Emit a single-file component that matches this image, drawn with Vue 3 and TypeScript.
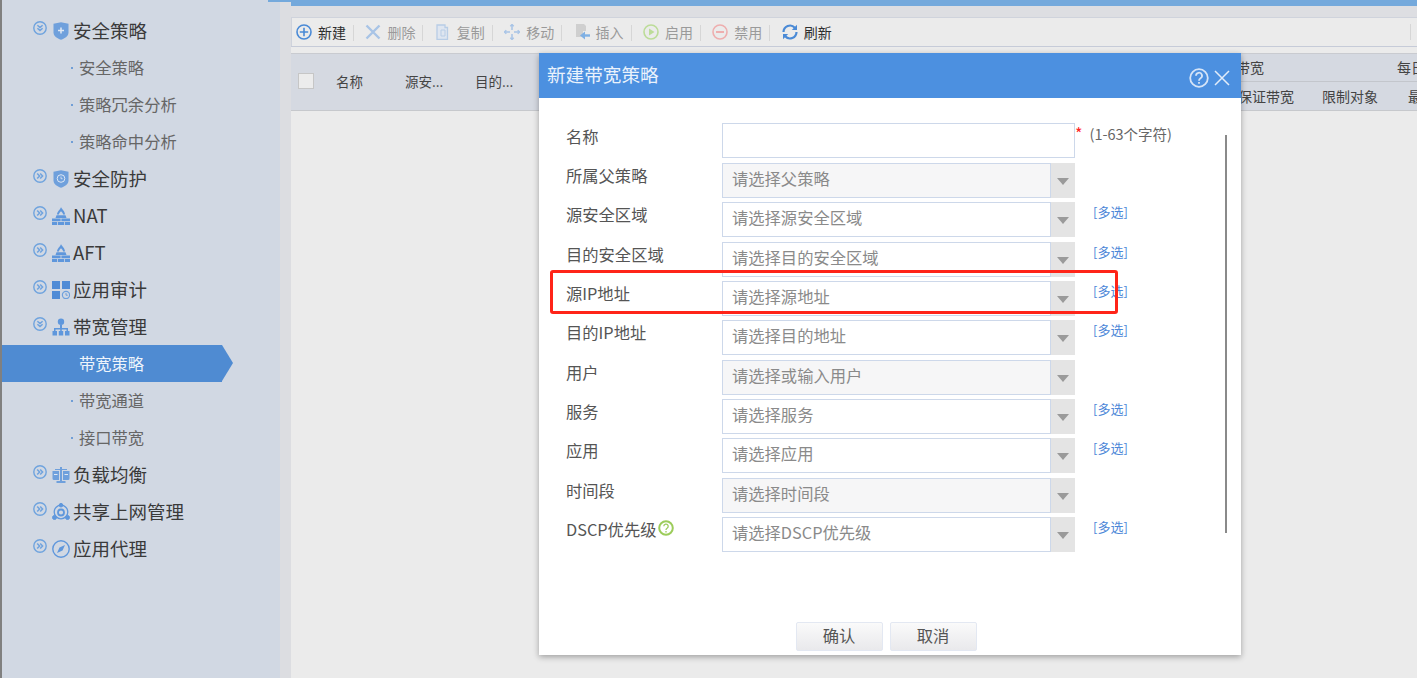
<script setup lang="ts">
type NavItem = { label: string; icon?: string; sub?: boolean; open?: boolean; active?: boolean }
const nav: NavItem[] = [
  { label: '安全策略', icon: 'shield', open: true },
  { label: '安全策略', sub: true },
  { label: '策略冗余分析', sub: true },
  { label: '策略命中分析', sub: true },
  { label: '安全防护', icon: 'guard' },
  { label: 'NAT', icon: 'wall' },
  { label: 'AFT', icon: 'wall' },
  { label: '应用审计', icon: 'grid' },
  { label: '带宽管理', icon: 'org', open: true },
  { label: '带宽策略', sub: true, active: true },
  { label: '带宽通道', sub: true },
  { label: '接口带宽', sub: true },
  { label: '负载均衡', icon: 'scale' },
  { label: '共享上网管理', icon: 'share' },
  { label: '应用代理', icon: 'compass' }
]
const tools = [
  { key: 'add', label: '新建', on: true },
  { key: 'del', label: '删除' },
  { key: 'copy', label: '复制' },
  { key: 'move', label: '移动' },
  { key: 'insert', label: '插入' },
  { key: 'enable', label: '启用' },
  { key: 'disable', label: '禁用' },
  { key: 'refresh', label: '刷新', on: true }
]
const rows = [
  { label: '所属父策略', ph: '请选择父策略', off: true },
  { label: '源安全区域', ph: '请选择源安全区域', multi: true },
  { label: '目的安全区域', ph: '请选择目的安全区域', multi: true },
  { label: '源IP地址', ph: '请选择源地址', multi: true },
  { label: '目的IP地址', ph: '请选择目的地址', multi: true },
  { label: '用户', ph: '请选择或输入用户', off: true },
  { label: '服务', ph: '请选择服务', multi: true },
  { label: '应用', ph: '请选择应用', multi: true },
  { label: '时间段', ph: '请选择时间段', off: true },
  { label: 'DSCP优先级', ph: '请选择DSCP优先级', multi: true, help: true }
]
</script>

<template>
  <div class="page">
    <div class="edge"></div>
    <aside class="side">
      <div v-for="(n, i) in nav" :key="i" class="nav" :class="{ sub: n.sub, active: n.active }">
        <template v-if="n.sub">
          <span class="dot"></span>
          <span class="subtext">{{ n.label }}</span>
        </template>
        <template v-else>
          <svg class="chev" viewBox="0 0 14 14" fill="none" stroke="#6fa3de">
            <circle cx="7" cy="7" r="6.2" stroke-width="1.4" />
            <path v-if="n.open" d="M4.4 4.2 7 6.6 9.6 4.200M4.400 7.200 7 9.600 9.600 7.200" stroke-width="1.500" />
            <path v-else d="M4.200 4.400 6.600 7 4.200 9.600M7.200 4.400 9.600 7 7.200 9.600" stroke-width="1.500" />
          </svg>
          <svg class="ico" viewBox="0 0 18 18">
            <g v-if="n.icon === 'shield'">
              <path d="M1.500 1.800 9 .3l7.500 1.500v8.700c0 3.500-3.500 6-7.500 7.300-4-1.300-7.500-3.800-7.500-7.300z" fill="#6fa0dc" />
              <path d="M9 5.500v6M6 8.500h6" stroke="#dfe8f4" stroke-width="1.500" />
            </g>
            <g v-else-if="n.icon === 'guard'">
              <path d="M1.500 1.800 9 .3l7.500 1.500v8.700c0 3.500-3.500 6-7.500 7.300-4-1.300-7.500-3.800-7.500-7.300z" fill="#6fa0dc" />
              <circle cx="9" cy="8.500" r="3.800" fill="none" stroke="#dfe8f4" stroke-width="1" />
              <path d="M9 6.500v2.200h1.600" fill="none" stroke="#dfe8f4" stroke-width=".8" />
            </g>
            <g v-else-if="n.icon === 'wall'" fill="#5f97dc">
              <path d="M9 0c.5 2 4 4 4 7.500h-2c0-1.500-1-2.400-2-3.300-1 1-2 1.800-2 3.300H5C5 4.500 8.500 2.500 9 0z" />
              <path d="M4.500 8.200h9l1 2.800h-11zM0 11.500h8.600v2.800H0zM9.400 11.500H18v2.800H9.400zM0 15h5v3H0zM5.800 15h6.400v3H5.800zM13 15h5v3h-5z" />
            </g>
            <g v-else-if="n.icon === 'grid'">
              <path d="M0 0h8v8H0zM10 0h8v8h-8zM0 10h8v8H0z" fill="#4f8bd6" />
              <circle cx="14" cy="14" r="3.600" fill="none" stroke="#6fa0dc" stroke-width="1.200" />
              <path d="M14 12v2.200h1.800" fill="none" stroke="#6fa0dc" />
            </g>
            <g v-else-if="n.icon === 'org'" fill="#5f97dc">
              <circle cx="9" cy="3.800" r="3.200" />
              <path d="M8 7h2v3h6v3.500h-1.500V11.500h-4.700v2H8.200v-2H3.500v2H2V10h6z" />
              <path d="M.5 13h4.500v4.500H.500zM6.800 13h4.400v4.500H6.800zM13 13h4.500v4.500H13z" />
            </g>
            <g v-else-if="n.icon === 'scale'" fill="#6fa0dc">
              <path d="M8 1h2v14h3.500v2h-9v-2H8z" />
              <path d="M.5 5H7v9H2a1.500 1.500 0 0 1-1.500-1.500zM11 5h6.500v7.500A1.500 1.500 0 0 1 16 14h-5z" />
              <path d="M3 3h12v1H3z" />
              <path d="M2 8h3.500v1H2zM12.500 8H16v1h-3.500z" fill="#dfe8f4" />
            </g>
            <g v-else-if="n.icon === 'share'" fill="none" stroke="#5f97dc">
              <circle cx="9" cy="9" r="6.800" stroke-width="1.300" />
              <circle cx="9" cy="9.500" r="3" stroke-width="1.800" />
              <circle cx="9" cy="2.200" r="1.800" fill="#5f97dc" />
              <circle cx="2.500" cy="14.500" r="2" fill="#5f97dc" />
              <circle cx="15.500" cy="14.500" r="2" fill="#5f97dc" />
            </g>
            <g v-else>
              <circle cx="9" cy="9" r="8.200" fill="none" stroke="#5f97dc" stroke-width="1.400" />
              <path d="M13 5 10.500 10.500 5 13 7.500 7.500z" fill="#5f97dc" />
            </g>
          </svg>
          <span class="top">{{ n.label }}</span>
        </template>
      </div>
    </aside>
    <div class="gutter"><span class="corner"></span></div>

    <main class="main">
      <div class="banner"></div>
      <div class="toolbar">
        <div v-for="t in tools" :key="t.key" class="tool" :class="{ on: t.on }">
          <svg class="tico" viewBox="0 0 16 16" fill="none">
            <g v-if="t.key === 'add'" stroke="#4a8ad6">
              <circle cx="8" cy="8" r="7" stroke-width="1.600" />
              <path d="M8 3.800v8.400M3.800 8h8.400" stroke-width="1.600" />
            </g>
            <path v-else-if="t.key === 'del'" d="M1.500 1.500l13 13M14.500 1.500l-13 13" stroke="#a8c4e6" stroke-width="2.400" />
            <g v-else-if="t.key === 'copy'" stroke="#b8cde6">
              <path d="M2 1h8v2.500h2.500V15.500H2z" fill="#dfe6f0" stroke-width="1.300" />
              <path d="M6 6h4v6H6z" stroke-width="1" />
            </g>
            <g v-else-if="t.key === 'move'" stroke="#a8c4e6" stroke-width="1.500">
              <path d="M8 .5v5.500M8 10v5.500M.5 8H6M10 8h5.500" />
              <path d="M6.300 2.300 8 .6l1.700 1.700M6.300 13.700 8 15.400l1.700-1.700M2.300 6.300.6 8l1.700 1.700M13.700 6.300 15.400 8l-1.700 1.700" />
            </g>
            <g v-else-if="t.key === 'insert'">
              <path d="M2 0h8l2 2v5H9v6H2z" fill="#cfcfcf" />
              <path d="M16 11.500H9" stroke="#7fb0e4" stroke-width="2.400" />
              <path d="M6 11.500 11 7.500v8z" fill="#7fb0e4" />
            </g>
            <g v-else-if="t.key === 'enable'">
              <circle cx="8" cy="8" r="7" stroke="#bcdc98" stroke-width="1.600" />
              <path d="M6 4.500 11.500 8 6 11.500z" fill="#bcdc98" />
            </g>
            <g v-else-if="t.key === 'disable'" stroke="#eeaeae">
              <circle cx="8" cy="8" r="7" stroke-width="1.600" />
              <path d="M4 8h8" stroke-width="2" />
            </g>
            <g v-else stroke="#4a8ad6" stroke-width="2.200">
              <path d="M1.500 8a6.500 6.500 0 0 1 11.300-4.300" />
              <path d="M14.500 8a6.500 6.500 0 0 1-11.300 4.300" />
              <path d="M15 .8V6h-5.200z" stroke-width="0" fill="#4a8ad6" />
              <path d="M1 15.200V10h5.200z" stroke-width="0" fill="#4a8ad6" />
            </g>
          </svg>
          <span>{{ t.label }}</span>
          <i v-if="t.key !== 'refresh'" class="sep"></i>
        </div>
        <i class="tend"></i>
      </div>

      <div class="thead">
        <span class="check"></span>
        <span class="th w-name">名称</span>
        <span class="th w-col">源安...</span>
        <span class="th w-col">目的...</span>
        <div class="th-right">
          <div class="tr-up">
            <span class="band">带宽</span>
            <span>每日</span>
          </div>
          <div class="tr-down">
            <span class="guar">保证带宽</span>
            <span class="lim">限制对象</span>
            <span>最</span>
          </div>
        </div>
      </div>
    </main>

    <section class="dialog">
      <header class="dhead">
        <span class="dtitle">新建带宽策略</span>
        <svg class="help" viewBox="0 0 20 20" fill="none" stroke="#d5e4f7">
          <circle cx="10" cy="10" r="8.800" stroke-width="1.800" />
          <path d="M7 7.800a3 3 0 1 1 4.500 2.500c-1 .6-1.500 1-1.500 2.400" stroke-width="1.800" />
          <path d="M10 14v1.800" stroke-width="1.800" />
        </svg>
        <svg class="close" viewBox="0 0 16 16" fill="none" stroke="#e2ecf9" stroke-width="1.500">
          <path d="M1 1l14 14M15 1 1 15" />
        </svg>
      </header>

      <div class="dbody">
        <div class="frow name">
          <label class="flabel">名称</label>
          <div class="input"></div>
          <span class="req"><b>*</b>(1-63个字符)</span>
        </div>
        <div v-for="r in rows" :key="r.label" class="frow">
          <label class="flabel">
            {{ r.label }}
            <svg v-if="r.help" class="qm" viewBox="0 0 16 16" fill="none" stroke="#9ccc5a">
              <circle cx="8" cy="8" r="6.800" stroke-width="2" />
              <path d="M5.800 6.300a2.200 2.200 0 1 1 3.300 1.900c-.8.500-1.100.8-1.100 1.800M8 11v1.600" stroke-width="1.300" />
            </svg>
          </label>
          <div class="select" :class="{ off: r.off }">
            <span class="ph">{{ r.ph }}</span>
            <span class="arrow"></span>
          </div>
          <a v-if="r.multi" class="multi">[多选]</a>
        </div>
        <div class="scroll"></div>
      </div>

      <footer class="dfoot">
        <button class="btn">确认</button>
        <button class="btn">取消</button>
      </footer>
    </section>

    <div class="mark"></div>
  </div>
</template>

<style>
html, body { margin: 0; padding: 0; overflow: hidden; }
</style>

<style scoped>
.page {
  position: relative;
  display: flex;
  width: 1417px;
  height: 678px;
  overflow: hidden;
  background: #ebebeb;
  font-family: "Noto Sans CJK SC", "Noto Sans", sans-serif;
  color: #555;
}
.edge { width: 2px; flex: none; background: #808080; }
.side {
  width: 278px;
  flex: none;
  box-sizing: border-box;
  padding-top: 12px;
  background: #d1d8e3;
}
.nav {
  position: relative;
  display: flex;
  align-items: center;
  box-sizing: border-box;
  height: 37px;
  padding-left: 31px;
  font-size: 18.500px;
  color: #3a3a3a;
}
.chev { width: 14px; height: 14px; margin-top: -6px; flex: none; }
.ico { width: 18px; height: 18px; margin-left: 5px; flex: none; }
.top { margin-left: 3px; line-height: 37px; }
.nav.sub { font-size: 16.300px; color: #666; padding-left: 69px; }
.subtext { margin-top: -2px; }
.dot { width: 2px; height: 2px; margin-right: 6px; background: #4f8bd2; border-radius: 50%; flex: none; }
.nav.active { width: 220px; background: #4f8bd2; color: #eef4fb; }
.nav.active::after {
  content: "";
  position: absolute;
  left: 220px;
  top: 0;
  border-left: 11px solid #4f8bd2;
  border-top: 18.500px solid transparent;
  border-bottom: 18.500px solid transparent;
}
.gutter { position: relative; width: 11px; flex: none; background: #dcdde1; }
.corner { position: absolute; left: -12px; top: 0; width: 23px; height: 2px; background: #74a9dc; }

.main { flex: 1; min-width: 0; display: flex; flex-direction: column; }
.banner { height: 6px; background: #74a9dc; }
.toolbar {
  position: relative;
  display: flex;
  align-items: center;
  box-sizing: border-box;
  height: 41px;
  padding: 11px 0 0 5px;
  background: linear-gradient(#dddee2 0 11px, #ebebeb 11px);
  border-bottom: 1px solid #c6cbd8;
}
.toolbar::before {
  content: "";
  position: absolute;
  left: 0;
  right: 0;
  top: 11px;
  height: 1px;
  background: #cfd3dc;
}
.toolbar::after {
  content: "";
  position: absolute;
  left: 0;
  top: 11px;
  bottom: 0;
  width: 1px;
  background: #cfd3dc;
}
.tend { position: absolute; left: 1119px; top: 18px; width: 1px; height: 16px; background: #d6d6d6; }
.tool {
  position: relative;
  display: flex;
  align-items: center;
  width: 69.400px;
  flex: none;
  font-size: 14px;
  color: #9a9a9a;
}
.tool.on { color: #2e2e2e; }
.tico { width: 16px; height: 16px; margin-right: 6px; flex: none; }
.sep { position: absolute; left: 57px; top: 3px; width: 1px; height: 16px; background: #d6d6d6; }
.thead {
  display: flex;
  align-items: center;
  height: 58px;
  margin-top: 5.500px;
  box-sizing: border-box;
  background: #d5d9e1;
  border-top: 1px solid #c9cbd0;
  border-bottom: 1px solid #c6c8cc;
  font-size: 13.500px;
  color: #444;
}
.check {
  width: 14px;
  height: 14px;
  margin: -2px 0 0 7px;
  flex: none;
  background: #ececec;
  border: 1px solid #c6c6c6;
}
.th { flex: none; margin-top: -2px; }
.w-name { width: 69px; margin-left: 22px; }
.w-col { width: 70px; }
.th-right {
  flex: none;
  width: 200px;
  margin-left: 693px;
  align-self: stretch;
  display: flex;
  flex-direction: column;
  font-size: 14px;
}
.tr-up, .tr-down { flex: 1; display: flex; align-items: center; white-space: nowrap; }
.tr-up { border-bottom: 1px solid #c3c6cc; }
.band { width: 161px; margin-left: -2px; }
.guar { width: 84px; }
.lim { width: 86px; }

.dialog {
  position: absolute;
  left: 539px;
  top: 53px;
  width: 702px;
  height: 602px;
  display: flex;
  flex-direction: column;
  background: #fff;
  box-shadow: 0 2px 6px rgba(0, 0, 0, .32);
}
.dhead {
  display: flex;
  align-items: center;
  flex: none;
  height: 45px;
  padding: 0 11px 0 8px;
  background: #4c90e0;
  color: #eaf2fc;
}
.dtitle { flex: 1; font-size: 18.600px; margin-top: -4px; }
.help { width: 20px; height: 20px; margin-top: 4px; }
.close { width: 16px; height: 16px; margin: 4px 0 0 5px; }
.dbody {
  position: relative;
  flex: 1;
  padding: 25px 0 0 27px;
  display: flex;
  flex-direction: column;
  gap: 4.350px;
  font-size: 16.300px;
}
.frow { display: flex; height: 35px; flex: none; }
.flabel {
  width: 156px;
  flex: none;
  display: flex;
  align-items: center;
  height: 24px;
  color: #555;
  white-space: nowrap;
}
.name .flabel { height: 26px; }
.qm { width: 16px; height: 16px; margin-left: 2px; margin-top: -2px; }
.input {
  width: 353px;
  height: 35px;
  box-sizing: border-box;
  border: 1px solid #cdd8ea;
  flex: none;
}
.name { height: 35px; margin-bottom: .500px; }
.req { font-size: 14.500px; color: #666; line-height: 20px; white-space: nowrap; }
.req b { color: #f22; font-weight: 400; font-size: 16px; margin-right: 7px; }
.select {
  display: flex;
  width: 353px;
  height: 35px;
  flex: none;
  box-sizing: border-box;
}
.ph {
  flex: 1;
  box-sizing: border-box;
  padding-left: 9px;
  line-height: 29px;
  border: 1px solid #cdd8ea;
  color: #8a8a8a;
}
.off .ph { background: #f6f6f7; }
.arrow {
  position: relative;
  width: 24px;
  flex: none;
  background: #e4e4e4;
}
.arrow::after {
  content: "";
  position: absolute;
  left: 6px;
  top: 15px;
  border-top: 7px solid #9a9a9a;
  border-left: 6px solid transparent;
  border-right: 6px solid transparent;
}
.multi {
  margin-left: 18px;
  font-size: 13px;
  line-height: 20px;
  color: #4d87d8;
}
.scroll {
  position: absolute;
  left: 686px;
  top: 37px;
  width: 2px;
  height: 398px;
  background: #8a8a8a;
}
.dfoot {
  display: flex;
  justify-content: center;
  gap: 7px;
  flex: none;
  height: 33px;
  padding-right: 8px;
}
.btn {
  width: 87px;
  height: 29px;
  padding: 0 0 3px;
  font: inherit;
  font-size: 16.300px;
  color: #555;
  background: linear-gradient(#fafafa, #e9e9ec);
  border: 1px solid #e3e8f2;
  border-radius: 2px;
}
.mark {
  position: absolute;
  left: 550px;
  top: 270px;
  width: 568px;
  height: 44px;
  box-sizing: border-box;
  border: 3px solid #ff2418;
  border-radius: 3px;
}
</style>
